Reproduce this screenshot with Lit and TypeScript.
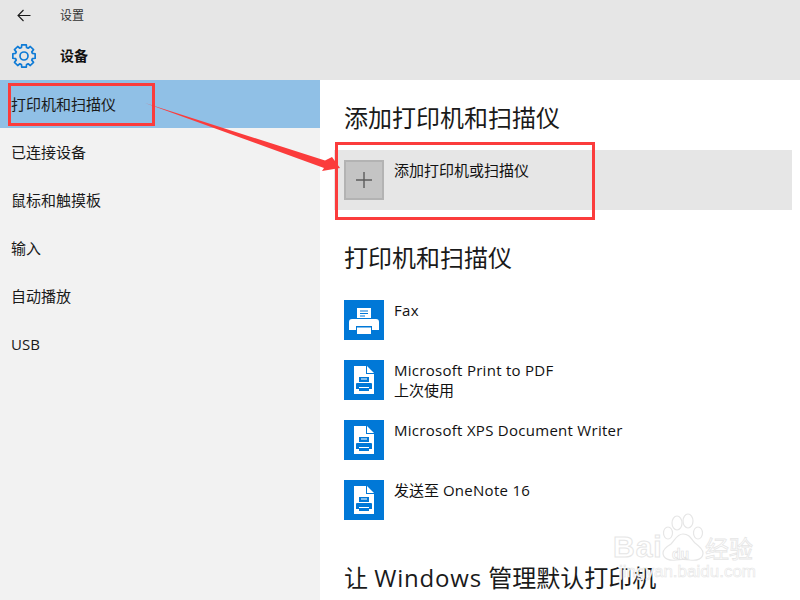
import { LitElement, html, css, svg } from "lit";
import { customElement } from "lit/decorators.js";

const gearPath = (() => {
  const cx = 12, cy = 12, teeth = 8, rO = 11.4, rI = 8.8;
  let d = "";
  for (let i = 0; i < teeth; i++) {
    const a = (i / teeth) * Math.PI * 2 - Math.PI / 2;
    const w1 = 0.3, w2 = 0.2;
    const pts = [
      [rI, a - w1],
      [rO, a - w2],
      [rO, a + w2],
      [rI, a + w1],
    ];
    pts.forEach(([r, t], j) => {
      const x = (cx + r * Math.cos(t)).toFixed(2);
      const y = (cy + r * Math.sin(t)).toFixed(2);
      d += `${i === 0 && j === 0 ? "M" : "L"}${x} ${y} `;
    });
  }
  return d + "Z";
})();

@customElement("app-root")
export class AppRoot extends LitElement {
  static styles = css`
    :host {
      display: block;
      position: relative;
      width: 800px;
      height: 600px;
      overflow: hidden;
      background: #fff;
      font-family: "Open Sans", "Noto Sans CJK SC", sans-serif;
      color: #111;
    }
    .header {
      height: 80px;
      background: #e6e6e6;
      display: flex;
      flex-direction: column;
    }
    .top {
      height: 30px;
      display: flex;
      align-items: center;
      font-size: 12px;
      color: #333;
    }
    .back { width: 60px; display: flex; padding: 1px 0 0 16px; box-sizing: border-box; }
    .sec {
      height: 50px;
      display: flex;
      align-items: center;
      font-size: 14px;
      font-weight: 700;
    }
    .gear { width: 60px; padding: 2px 0 0 12px; box-sizing: border-box; display: flex; }
    .body { display: flex; height: 520px; }
    .side { width: 320px; background: #f2f2f2; flex: none; }
    .item {
      height: 48px;
      box-sizing: border-box;
      display: flex;
      align-items: center;
      padding: 0 0 2px 11px;
      font-size: 15px;
      color: #1a1a1a;
    }
    .item.on { background: #90c0e6; }
    .item.latin { padding-bottom: 0; }
    .main { flex: 1; padding: 22px 8px 0 14px; min-width: 0; }
    h2 {
      margin: 0;
      height: 32px;
      line-height: 32px;
      font-size: 24px;
      font-weight: 400;
      padding-left: 10px;
      white-space: nowrap;
      color: #1a1a1a;
    }
    h2 .lat { letter-spacing: 0.8px; }
    .add {
      margin-top: 16px;
      height: 60px;
      background: #e6e6e6;
      display: flex;
      align-items: flex-start;
      gap: 10px;
      padding: 10px;
      box-sizing: border-box;
      font-size: 15px;
    }
    .plus {
      width: 40px;
      height: 40px;
      box-sizing: border-box;
      border: 2px solid #b3b3b3;
      background: #c4c4c4;
      display: flex;
      align-items: center;
      justify-content: center;
      flex: none;
    }
    .rowtext { line-height: 20px; white-space: nowrap; }
    .list {
      margin: 26px 0 42px;
      padding-left: 10px;
      display: flex;
      flex-direction: column;
      gap: 20px;
    }
    .h-second { margin-top: 32px; }
    .printer {
      display: flex;
      gap: 10px;
      height: 40px;
      font-size: 15px;
      line-height: 20px;
    }
    .lat { letter-spacing: 0.28px; }
    .tile {
      width: 40px;
      height: 40px;
      background: #0078d7;
      flex: none;
      display: block;
    }
    .box { position: absolute; border: 3px solid #fb3c3c; box-sizing: border-box; }
    .b1 { left: 8px; top: 83px; width: 147px; height: 43px; }
    .b2 { left: 335px; top: 142px; width: 260px; height: 78px; }
    .arrow { position: absolute; left: 0; top: 0; pointer-events: none; }
    .mark {
      position: absolute;
      left: 612px;
      top: 512px;
      width: 160px;
      height: 70px;
      font-family: "Liberation Sans", sans-serif;
      color: #fff;
      -webkit-text-stroke: 1px #e6e6e6;
    }
    .mark span { position: absolute; white-space: nowrap; }
    .m1 { left: 1px; top: 18px; font-size: 30px; font-weight: 700; letter-spacing: 1px; }
    .m2 { left: 60px; top: 34px; font-size: 14px; font-weight: 700; -webkit-text-stroke: 0.6px #dedede; }
    .m3 { left: 93px; top: 18px; font-size: 24px; font-family: "Noto Sans CJK SC", sans-serif; -webkit-text-stroke: 0.8px #e6e6e6; }
    .m4 { left: 7px; top: 50px; font-size: 17px; -webkit-text-stroke: 0.6px #e6e6e6; }
    .paw { position: absolute; left: 0; top: 0; }
  `;

  private faxIcon() {
    return html`<svg class="tile" viewBox="0 0 40 40">
      <path fill="#fff" d="M13 8h14v10H13z"/>
      <path fill="#0078d7" d="M16 10.5h8v1h-8zM16 13h8v1h-8zM16 15.5h5v1h-5z"/>
      <path fill="#fff" d="M5 22q0-3 3-3h24q3 0 3 3v8h-7v-4H12v4H5z"/>
      <path fill="#fff" d="M13 27.5h14V34H13z"/>
    </svg>`;
  }

  private docIcon() {
    return html`<svg class="tile" viewBox="0 0 40 40">
      <path fill="#fff" d="M10 6h12v8h8v20H10z"/>
      <path fill="#fff" d="M23 6l7 7h-7z"/>
      <path fill="#0078d7" d="M15 17h10v5H15z"/>
      <path fill="#fff" d="M17 18.5h6v1h-6z"/>
      <path fill="#0078d7" d="M13 23h14q1 0 1 1v5h-3v-2H15v2h-3v-5q0-1 1-1z"/>
      <path fill="#0078d7" d="M15 28h10v3H15z"/>
    </svg>`;
  }

  render() {
    const items = ["已连接设备", "鼠标和触摸板", "输入", "自动播放"];
    return html`
      <div class="header">
        <div class="top">
          <div class="back">
            <svg width="15" height="15" viewBox="0 0 15 15" fill="none" stroke="#1a1a1a" stroke-width="1.1">
              <path d="M2 7.5h12.5M7.5 2L2 7.5 7.5 13"/>
            </svg>
          </div>
          <span>设置</span>
        </div>
        <div class="sec">
          <div class="gear">
            <svg width="24" height="24" viewBox="0 0 24 24" fill="none" stroke="#0f7bd6" stroke-width="1.7" stroke-linejoin="round">
              <path d=${gearPath}/>
              <circle cx="12" cy="12" r="4"/>
            </svg>
          </div>
          <span>设备</span>
        </div>
      </div>
      <div class="body">
        <div class="side">
          <div class="item on">打印机和扫描仪</div>
          ${items.map((t) => html`<div class="item">${t}</div>`)}
          <div class="item latin">USB</div>
        </div>
        <div class="main">
          <h2>添加打印机和扫描仪</h2>
          <div class="add">
            <div class="plus">
              <svg width="16" height="16" viewBox="0 0 16 16" stroke="#5c5c5c" stroke-width="1.4">
                <path d="M8 0v16M0 8h16"/>
              </svg>
            </div>
            <div class="rowtext">添加打印机或扫描仪</div>
          </div>
          <h2 class="h-second">打印机和扫描仪</h2>
          <div class="list">
            <div class="printer">${this.faxIcon()}<div class="lat">Fax</div></div>
            <div class="printer">${this.docIcon()}<div><span class="lat">Microsoft Print to PDF</span><br />上次使用</div></div>
            <div class="printer">${this.docIcon()}<div class="lat">Microsoft XPS Document Writer</div></div>
            <div class="printer">${this.docIcon()}<div>发送至 <span class="lat">OneNote 16</span></div></div>
          </div>
          <h2>让 <span class="lat">Windows</span> 管理默认打印机</h2>
        </div>
      </div>
      <div class="box b1"></div>
      <div class="box b2"></div>
      <svg class="arrow" width="800" height="600">
        ${svg`<path fill="#fb3c3c" d="M145 103L325 160.5 332 157 340 168 322 171 324 168Z"/>`}
      </svg>
      <div class="mark">
        <svg class="paw" width="160" height="70" viewBox="0 0 160 70" fill="#fff" stroke="#e6e6e6" stroke-width="1.2">
          <ellipse cx="65" cy="11" rx="5" ry="7"/>
          <ellipse cx="76" cy="9" rx="5" ry="7"/>
          <ellipse cx="56" cy="21" rx="4.5" ry="6"/>
          <ellipse cx="86" cy="21" rx="4.5" ry="6"/>
          <path d="M71 22c-6 0-8 6-12 10-5 3-8 6-8 9 0 6 7 8 13 7 5-1 9-1 14 0 7 1 13-1 13-7 0-4-4-7-8-10-4-4-5-9-12-9z"/>
        </svg>
        <span class="m1">Bai</span>
        <span class="m2">du</span>
        <span class="m3">经验</span>
        <span class="m4">jingyan.baidu.com</span>
      </div>
    `;
  }
}
